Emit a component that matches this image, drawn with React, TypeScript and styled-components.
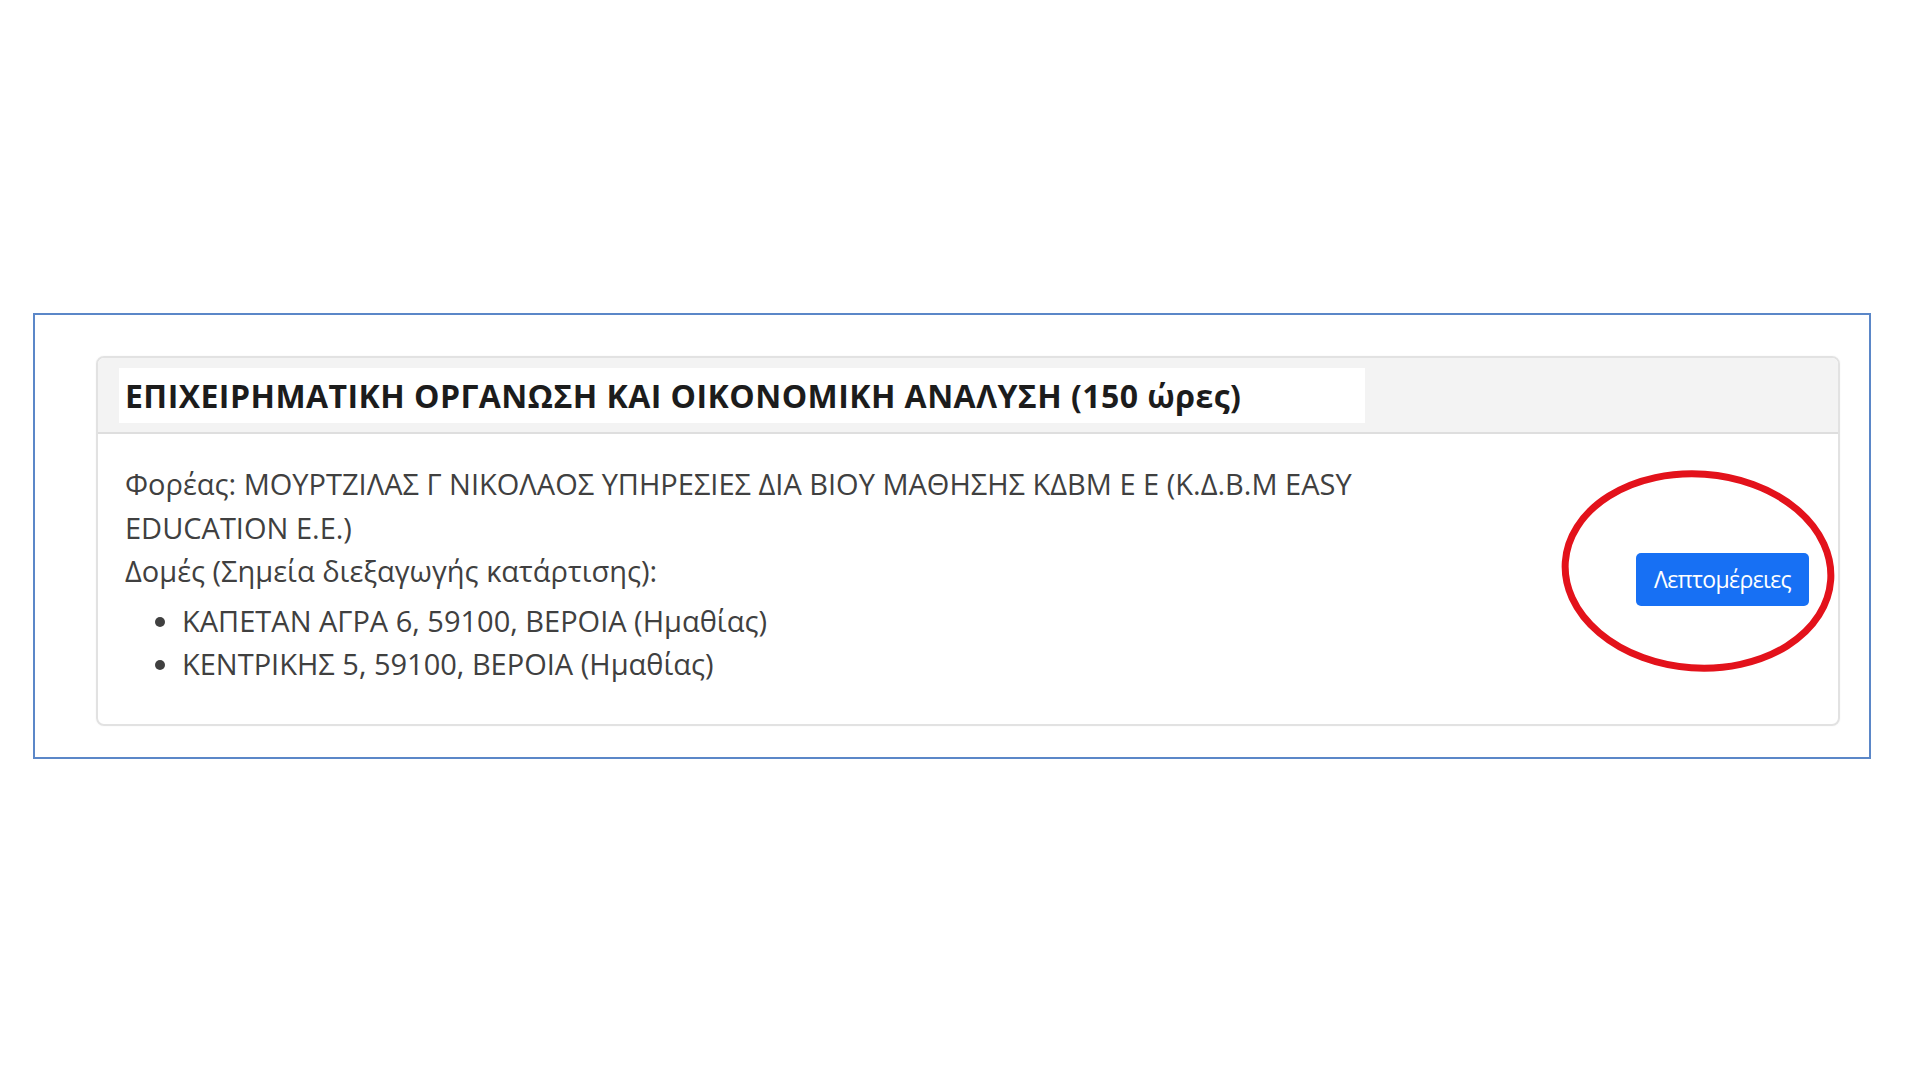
import React from "react";
import styled, { createGlobalStyle } from "styled-components";

const GlobalStyle = createGlobalStyle`
  html, body {
    margin: 0;
    padding: 0;
    background: #ffffff;
  }
  body {
    font-family: "Open Sans", "Noto Sans", "DejaVu Sans", sans-serif;
  }
`;

const Page = styled.div`
  width: 1920px;
  height: 1080px;
  padding-top: 313px;
  padding-left: 33px;
  box-sizing: border-box;
`;

const Frame = styled.div`
  width: 1838px;
  height: 446px;
  box-sizing: border-box;
  border: 2px solid #5b87c8;
  padding: 41px 29px 0 61px;
`;

const Card = styled.div`
  height: 370px;
  box-sizing: border-box;
  border: 2px solid #e2e2e2;
  border-radius: 8px;
  overflow: hidden;
  display: flex;
  flex-direction: column;
  box-shadow: 0 0 2px rgba(0, 0, 0, 0.06);
`;

const Header = styled.div`
  height: 76px;
  box-sizing: border-box;
  background: #f3f3f3;
  border-bottom: 2px solid #dedede;
  display: flex;
  align-items: center;
  padding-left: 21px;
`;

const Title = styled.h1`
  margin: 0;
  background: #ffffff;
  width: 1246px;
  height: 55px;
  display: flex;
  align-items: center;
  padding-left: 6px;
  box-sizing: border-box;
  font-size: 32px;
  font-weight: 700;
  color: #1c1c1c;
  letter-spacing: 0.45px;
  white-space: nowrap;
`;

const Body = styled.div`
  flex: 1;
  display: flex;
  align-items: center;
  justify-content: space-between;
  padding: 0 29px 0 27px;
`;

const Info = styled.div`
  width: 1270px;
  font-size: 29px;
  line-height: 43.5px;
  color: #404040;
  padding-bottom: 10px;
`;

const Line = styled.p`
  margin: 0;
`;

const Sites = styled.ul`
  margin: 6px 0 0;
  padding-left: 57px;
  list-style: disc;
`;

const ActionArea = styled.div`
  position: relative;
  display: flex;
  align-items: center;
`;

const DetailsButton = styled.button`
  width: 173px;
  height: 53px;
  border: none;
  border-radius: 5px;
  background: #1770f4;
  color: #ffffff;
  font-family: "Open Sans", "Noto Sans", sans-serif;
  font-size: 23px;
  letter-spacing: -0.6px;
  cursor: pointer;
`;

const Circle = styled.svg`
  position: absolute;
  left: -78px;
  top: -86px;
  width: 280px;
  height: 208px;
  pointer-events: none;
`;

export default function App() {
  return (
    <>
      <GlobalStyle />
      <Page>
        <Frame>
          <Card>
            <Header>
              <Title>ΕΠΙΧΕΙΡΗΜΑΤΙΚΗ ΟΡΓΑΝΩΣΗ ΚΑΙ ΟΙΚΟΝΟΜΙΚΗ ΑΝΑΛΥΣΗ (150 ώρες)</Title>
            </Header>
            <Body>
              <Info>
                <Line>
                  Φορέας: ΜΟΥΡΤΖΙΛΑΣ Γ ΝΙΚΟΛΑΟΣ ΥΠΗΡΕΣΙΕΣ ΔΙΑ ΒΙΟΥ ΜΑΘΗΣΗΣ ΚΔΒΜ Ε Ε (Κ.Δ.Β.Μ EASY EDUCATION Ε.Ε.)
                </Line>
                <Line>Δομές (Σημεία διεξαγωγής κατάρτισης):</Line>
                <Sites>
                  <li>ΚΑΠΕΤΑΝ ΑΓΡΑ 6, 59100, ΒΕΡΟΙΑ (Ημαθίας)</li>
                  <li>ΚΕΝΤΡΙΚΗΣ 5, 59100, ΒΕΡΟΙΑ (Ημαθίας)</li>
                </Sites>
              </Info>
              <ActionArea>
                <DetailsButton>Λεπτομέρειες</DetailsButton>
                <Circle viewBox="0 0 280 208">
                  <ellipse
                    cx="140"
                    cy="104"
                    rx="133"
                    ry="97"
                    fill="none"
                    stroke="#e3121b"
                    strokeWidth="7"
                    transform="rotate(4 140 104)"
                  />
                </Circle>
              </ActionArea>
            </Body>
          </Card>
        </Frame>
      </Page>
    </>
  );
}
